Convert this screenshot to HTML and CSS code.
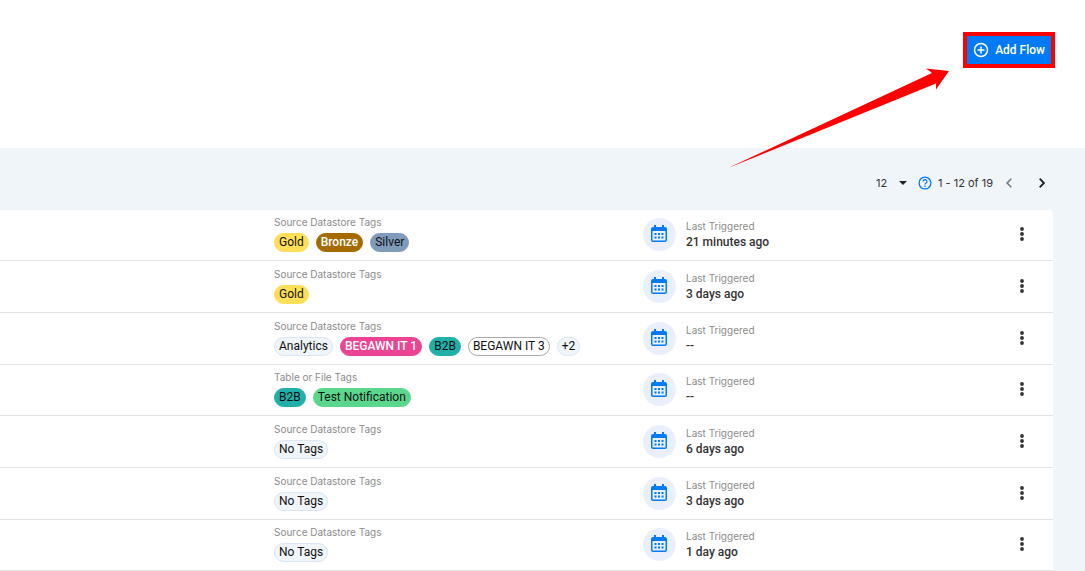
FILE: index.html
```html
<!DOCTYPE html>
<html lang="en">
<head>
<meta charset="utf-8">
<meta name="viewport" content="width=device-width, initial-scale=1">
<title>Flows</title>
<link rel="stylesheet" href="styles.css">
</head>
<body>
<svg class="sprite" aria-hidden="true">
  <symbol id="calendar" viewBox="0 0 16 18"><path fill="currentColor" fill-rule="evenodd" d="M2 2h1V0h2v2h6V0h2v2h1a2 2 0 0 1 2 2v11a2 2 0 0 1-2 2H2a2 2 0 0 1-2-2V4a2 2 0 0 1 2-2zM1.500 6v9.500h13V6zM3.500 8h2v2h-2zM7 8h2v2H7zM10.500 8h2v2h-2zM3.500 11.500h2v2h-2zM7 11.500h2v2H7zM10.500 11.500h2v2h-2z"/></symbol>
  <symbol id="dots" viewBox="0 0 4 14"><g fill="currentColor"><circle cx="2" cy="2" r="1.900"/><circle cx="2" cy="7" r="1.900"/><circle cx="2" cy="12" r="1.900"/></g></symbol>
</svg>
<header class="header">
  <button class="add-flow" type="button">
    <svg class="add-icon" viewBox="0 0 16 16" fill="none" stroke="currentColor" stroke-width="1.500" aria-hidden="true"><circle cx="8" cy="8" r="6.500"/><path d="M8 4.500v7M4.500 8h7"/></svg>
    Add Flow
  </button>
  <svg class="pointer" viewBox="0 0 221 100" aria-hidden="true"><path fill="#f00" d="M0 100 204 5 198 0.500 221 3 208 21.500V15.500Z"/></svg>
</header>
<main class="content">
  <nav class="pager" aria-label="Pagination">
    <label class="page-size">
      <select class="size-select" aria-label="Rows per page"><option>12</option><option>24</option></select>
      <svg class="caret" viewBox="0 0 8 4" aria-hidden="true"><path fill="#222" d="M0 0h8L4 4z"/></svg>
    </label>
    <svg class="help" viewBox="0 0 14 14" fill="none" stroke="currentColor" stroke-width="1.300" role="img" aria-label="Help"><circle cx="7" cy="7" r="5.900"/><path d="M5.100 5.600a1.900 1.900 0 1 1 2.800 1.600C7.200 7.600 7 7.900 7 8.600M7 9.600v1.300"/></svg>
    <span class="range">1 - 12 of 19</span>
    <button class="page-button previous" type="button" aria-label="Previous page"><svg class="chevron" viewBox="0 0 6 10" fill="none" stroke="currentColor" stroke-width="1.600"><path d="M5.300.700 1.100 5l4.200 4.300"/></svg></button>
    <button class="page-button" type="button" aria-label="Next page"><svg class="chevron" viewBox="0 0 6 10" fill="none" stroke="currentColor" stroke-width="1.800"><path d="M.700.700 4.900 5 .700 9.300"/></svg></button>
  </nav>
  <ul class="flows">
    <li class="flow">
      <div class="tags-cell"><span class="caption">Source Datastore Tags</span><div class="tags"><span class="tag gold">Gold</span><span class="tag bronze">Bronze</span><span class="tag silver">Silver</span></div></div>
      <div class="trigger"><span class="badge"><svg class="calendar"><use href="#calendar"/></svg></span><div class="trigger-text"><span class="caption">Last Triggered</span><span class="value">21 minutes ago</span></div></div>
      <button class="menu" type="button" aria-label="Flow actions"><svg class="dots"><use href="#dots"/></svg></button>
    </li>
    <li class="flow">
      <div class="tags-cell"><span class="caption">Source Datastore Tags</span><div class="tags"><span class="tag gold">Gold</span></div></div>
      <div class="trigger"><span class="badge"><svg class="calendar"><use href="#calendar"/></svg></span><div class="trigger-text"><span class="caption">Last Triggered</span><span class="value">3 days ago</span></div></div>
      <button class="menu" type="button" aria-label="Flow actions"><svg class="dots"><use href="#dots"/></svg></button>
    </li>
    <li class="flow">
      <div class="tags-cell"><span class="caption">Source Datastore Tags</span><div class="tags"><span class="tag">Analytics</span><span class="tag pink">BEGAWN IT 1</span><span class="tag teal">B2B</span><span class="tag white">BEGAWN IT 3</span><span class="tag">+2</span></div></div>
      <div class="trigger"><span class="badge"><svg class="calendar"><use href="#calendar"/></svg></span><div class="trigger-text"><span class="caption">Last Triggered</span><span class="value">--</span></div></div>
      <button class="menu" type="button" aria-label="Flow actions"><svg class="dots"><use href="#dots"/></svg></button>
    </li>
    <li class="flow">
      <div class="tags-cell"><span class="caption">Table or File Tags</span><div class="tags"><span class="tag teal">B2B</span><span class="tag green">Test Notification</span></div></div>
      <div class="trigger"><span class="badge"><svg class="calendar"><use href="#calendar"/></svg></span><div class="trigger-text"><span class="caption">Last Triggered</span><span class="value">--</span></div></div>
      <button class="menu" type="button" aria-label="Flow actions"><svg class="dots"><use href="#dots"/></svg></button>
    </li>
    <li class="flow">
      <div class="tags-cell"><span class="caption">Source Datastore Tags</span><div class="tags"><span class="tag">No Tags</span></div></div>
      <div class="trigger"><span class="badge"><svg class="calendar"><use href="#calendar"/></svg></span><div class="trigger-text"><span class="caption">Last Triggered</span><span class="value">6 days ago</span></div></div>
      <button class="menu" type="button" aria-label="Flow actions"><svg class="dots"><use href="#dots"/></svg></button>
    </li>
    <li class="flow">
      <div class="tags-cell"><span class="caption">Source Datastore Tags</span><div class="tags"><span class="tag">No Tags</span></div></div>
      <div class="trigger"><span class="badge"><svg class="calendar"><use href="#calendar"/></svg></span><div class="trigger-text"><span class="caption">Last Triggered</span><span class="value">3 days ago</span></div></div>
      <button class="menu" type="button" aria-label="Flow actions"><svg class="dots"><use href="#dots"/></svg></button>
    </li>
    <li class="flow">
      <div class="tags-cell"><span class="caption">Source Datastore Tags</span><div class="tags"><span class="tag">No Tags</span></div></div>
      <div class="trigger"><span class="badge"><svg class="calendar"><use href="#calendar"/></svg></span><div class="trigger-text"><span class="caption">Last Triggered</span><span class="value">1 day ago</span></div></div>
      <button class="menu" type="button" aria-label="Flow actions"><svg class="dots"><use href="#dots"/></svg></button>
    </li>
  </ul>
</main>
</body>
</html>
```
FILE: styles.css
```css
* { box-sizing: border-box; }
body {
  margin: 0;
  background: #f0f5fa;
  color: #333;
  font: 12px/16px Roboto, Inter, sans-serif;
}
button, select { font: inherit; color: inherit; background: none; border: 0; padding: 0; margin: 0; cursor: pointer; }
.sprite { display: none; }

.header {
  position: relative;
  display: flex;
  justify-content: flex-end;
  align-items: flex-start;
  padding: 32px 30px 80px;
  background: #fff;
}
.add-flow {
  display: flex;
  align-items: center;
  gap: 6px;
  height: 36px;
  padding: 0 6px;
  border: 4px solid #f00;
  background: #007bf5;
  color: #fff;
  font-weight: 500;
  white-space: nowrap;
}
.add-icon { width: 16px; height: 16px; }
.pointer {
  position: absolute;
  z-index: 1;
  top: 68px;
  right: 136px;
  width: 221px;
  height: 100px;
}

.content { padding-right: 32px; }
.pager {
  display: flex;
  align-items: center;
  justify-content: flex-end;
  height: 62px;
  padding: 8px 0 0;
  font: 11px/16px Inter, sans-serif;
}
.page-size { display: flex; align-items: center; margin-right: 11px; }
.size-select { width: 23px; appearance: none; }
.caret { width: 8px; height: 4px; }
.help { width: 14px; height: 14px; margin-right: 6px; color: #007bf5; }
.range { margin-right: 5px; }
.page-button { display: grid; place-items: center; width: 22px; height: 24px; color: #222; }
.page-button.previous { margin-right: 11px; color: #777; }
.chevron { width: 6px; height: 10px; }

.flows {
  margin: 0;
  padding: 0;
  list-style: none;
  background: #fff;
  border-top-right-radius: 4px;
}
.flow {
  display: flex;
  align-items: flex-start;
  min-height: 52px;
  padding: 1px 0 0 274px;
  border-bottom: 1px solid #e2e2e2;
}
.flow:nth-child(3n + 1) { min-height: 51px; padding-top: 0; }
.tags-cell { flex: 1; padding-top: 5px; }
.caption { display: block; color: #8c8c8c; font: 10px/14px Inter, sans-serif; }
.tags { display: flex; gap: 7px; padding-top: 4px; }
.tag {
  height: 19px;
  padding: 0 4px;
  border: 1px solid #d9e6f5;
  border-radius: 10px;
  background: #f0f5fa;
  color: #111;
  line-height: 17px;
  white-space: nowrap;
}
.gold { background: #ffdf55; border-color: #ffdf55; }
.bronze { background: #a56a00; border-color: #a56a00; color: #fff; font-weight: 500; }
.silver { background: #7f9bbb; border-color: #7f9bbb; }
.pink { background: #ec4393; border-color: #ec4393; color: #fff; font-weight: 500; }
.teal { background: #20b0a8; border-color: #20b0a8; }
.white { background: #fff; border-color: #aaa; }
.green { background: #5ad78c; border-color: #5ad78c; }
.trigger { display: flex; gap: 10px; width: 367px; padding-top: 8px; }
.badge {
  display: grid;
  place-items: center;
  width: 33px;
  height: 33px;
  padding: 0 1px 2px 0;
  border-radius: 50%;
  background: #e9effc;
  color: #007bf5;
}
.calendar { width: 16px; height: 18px; }
.trigger-text { padding-top: 1px; }
.value { display: block; padding-top: 1px; font-weight: 500; }
.menu { display: grid; place-items: center; width: 24px; height: 24px; margin: 12px 19px 0 0; }
.dots { width: 4px; height: 14px; }
```
